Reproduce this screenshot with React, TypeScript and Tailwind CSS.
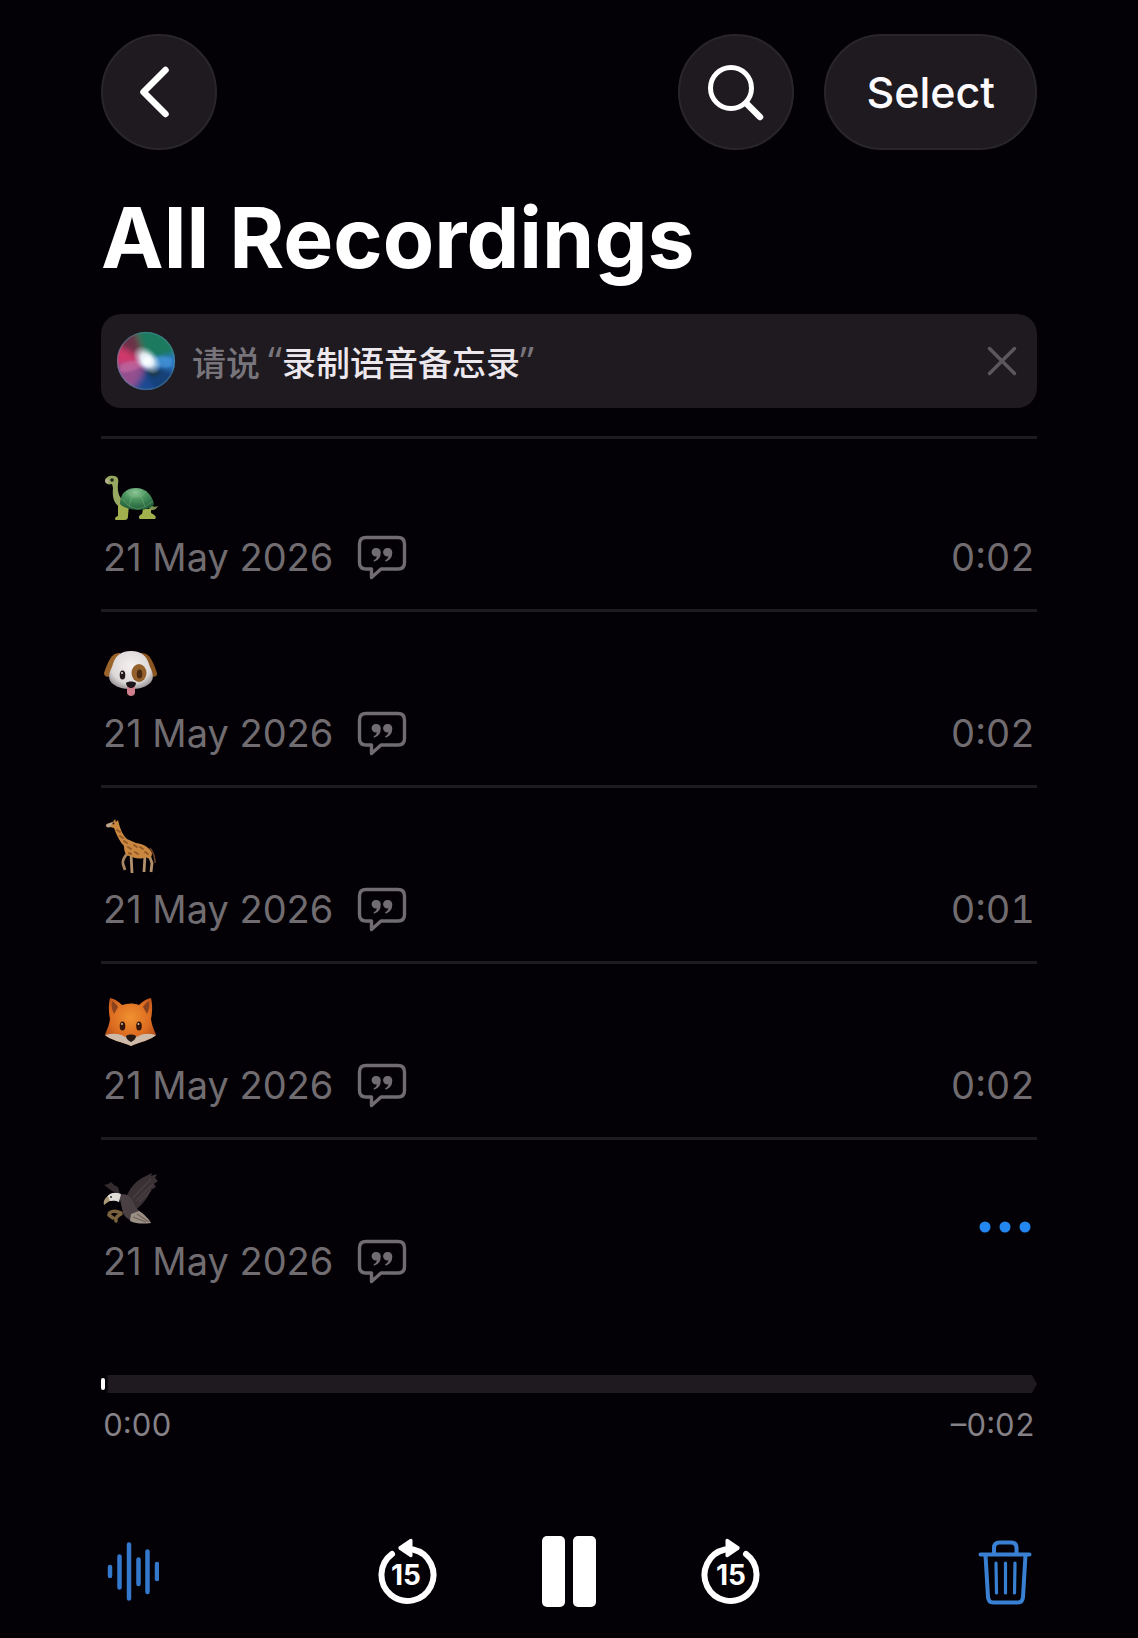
import React from 'react';

type Recording = {
  id: string;
  name: string;
  icon: React.ReactNode;
  date: string;
  duration?: string;
};

function Turtle() {
  return (
    <svg viewBox="0 0 56 56" className="w-14 h-14" role="img" aria-label="Turtle">
      <defs>
        <radialGradient id="shell" cx="45%" cy="20%" r="80%">
          <stop offset="0" stopColor="#8fc79a" />
          <stop offset="0.4" stopColor="#4d9660" />
          <stop offset="1" stopColor="#1f5c38" />
        </radialGradient>
      </defs>
      <path d="M47 39 C50 41 53 41 55 40 C54 43 50 45 46 44 Z" fill="#7d9450" />
      <path d="M2 15 C2 11 7 9 11 10 C15 10 16 14 15 18 C14 27 17 32 21 36 L17 41 C11 38 9 31 10 22 L9 18 C6 19 2 18 2 15 Z" fill="#97a860" />
      <path d="M15 39 H26 L25 50 C25 53 24 54 21 54 H13 C11 53 12 51 15 50 Z" fill="#a3b04e" />
      <path d="M40 43 H48 L48 47 C52 49 54 51 52 53 H37 C35 52 36 49 39 48 Z" fill="#a3b04e" />
      <path d="M17 38 C17 28 23 22 33 22 C43 22 49 29 51 38 C46 46 26 46 17 38 Z" fill="url(#shell)" />
      <path d="M23 25 L29 30 L38 30 L44 25 M29 30 L26 40 M38 30 L42 41 M26 40 L34 43 L42 41 M19 33 L26 40 M50 35 L42 41" stroke="#9bc58a" strokeOpacity="0.35" strokeWidth="1" fill="none" />
      <circle cx="9" cy="14" r="1.8" fill="#20251a" />
      <path d="M2 15 C3 12 6 13 6 15 C6 18 3 18 2 15" fill="#b4ad92" />
    </svg>
  );
}

function Dog() {
  return (
    <svg viewBox="0 0 56 56" className="w-14 h-14" role="img" aria-label="Dog">
      <defs>
        <radialGradient id="dogFace" cx="50%" cy="40%" r="60%">
          <stop offset="0" stopColor="#f5f1f0" />
          <stop offset="0.75" stopColor="#dcd8d8" />
          <stop offset="1" stopColor="#a29ea0" />
        </radialGradient>
      </defs>
      <path d="M17 11 C9 10 5 19 1 31 C1 35 5 36 9 33 L18 20 Z" fill="#9b642b" />
      <path d="M38 11 C46 10 50 19 54 31 C55 35 50 36 46 33 L38 20 Z" fill="#8b5520" />
      <path d="M28 9 C39 9 44 14 47 25 C51 33 51 38 46 42 C41 46 35 47 28 47 C21 47 15 46 10 42 C5 38 5 33 9 25 C12 14 17 9 28 9 Z" fill="url(#dogFace)" />
      <path d="M24 44 H32 L32 51 C31 55 25 55 24 51 Z" fill="#cf7f8c" />
      <ellipse cx="36" cy="31" rx="7.500" ry="9" fill="#93602c" />
      <ellipse cx="19.500" cy="33" rx="2.800" ry="4.500" fill="#24191a" />
      <ellipse cx="36.500" cy="32" rx="2.800" ry="4.500" fill="#4a2911" />
      <circle cx="19" cy="31" r="0.900" fill="#fff" />
      <path d="M23 41 C25 39 31 39 33 41 C33 44 30 46 28 46 C26 46 23 44 23 41 Z" fill="#1c1519" />
    </svg>
  );
}

function Giraffe() {
  return (
    <svg viewBox="0 0 56 56" className="w-14 h-14" role="img" aria-label="Giraffe">
      <path d="M25 35 C21 39 19 42 20 46 L22 52" stroke="#a98763" strokeWidth="2.800" fill="none" strokeLinejoin="round" />
      <path d="M28 36 L29 55 M42 37 L41 54 M46 37 L49 45 L48 54" stroke="#b3916b" strokeWidth="2.800" fill="none" strokeLinejoin="round" />
      <path d="M47 30 C51 35 52 39 52 45" stroke="#6d4225" strokeWidth="1.500" fill="none" />
      <path d="M10 4 L12 1 L13 4 L15 2 L16 6 C18 13 20 17 24 21 L33 25 C41 26 47 30 49 35 C49 40 46 42 43 39 C37 42 31 40 27 38 C22 38 21 32 21 28 C17 24 14 18 11 10 L7 9 C4 10 2 8 4 6 Z" fill="#c98740" />
      <path d="M10 4 L7 9 C4 10 2 8 4 6 Z" fill="#b9a58e" />
      <path d="M14 12 L17 14 M17 18 L20 20 M21 23 L24 25 M25 29 L28 31 M31 27 L34 29 M32 34 L35 36 M37 29 L40 31 M42 34 L45 36 M26 35 L28 36" stroke="#965b27" strokeWidth="2" strokeLinecap="round" />
      <circle cx="10.500" cy="5.500" r="1" fill="#24170f" />
    </svg>
  );
}

function Fox() {
  return (
    <svg viewBox="0 0 56 56" className="w-14 h-14" role="img" aria-label="Fox">
      <defs>
        <radialGradient id="foxFace" cx="50%" cy="40%" r="65%">
          <stop offset="0" stopColor="#f19131" />
          <stop offset="0.6" stopColor="#dc6c20" />
          <stop offset="1" stopColor="#a84418" />
        </radialGradient>
      </defs>
      <path d="M7 4 C12 5 16 8 19 11 C25 9 31 9 36 11 C39 8 43 5 48 4 C50 12 49 20 48 25 C49 33 52 37 53 41 C48 46 37 48 28 52 C19 48 7 46 2 41 C3 37 6 33 7 25 C6 20 5 12 7 4 Z" fill="url(#foxFace)" />
      <path d="M9 7 C12 9 14 11 15 13 L11 20 C9 16 8 12 9 7 Z M46 7 C43 9 41 11 40 13 L44 20 C46 16 47 12 46 7 Z" fill="#8b421e" />
      <path d="M2 41 C9 39 17 39 22 43 C25 40 31 40 34 43 C39 39 46 39 53 41 C48 46 37 48 28 52 C19 48 7 46 2 41 Z" fill="#cdbaa9" />
      <ellipse cx="19.500" cy="32" rx="2.800" ry="4.500" fill="#33150b" />
      <ellipse cx="36" cy="32" rx="2.800" ry="4.500" fill="#33150b" />
      <circle cx="19" cy="30" r="0.900" fill="#f0c9a4" />
      <circle cx="35.500" cy="30" r="0.900" fill="#f0c9a4" />
      <path d="M23 42 C25 40 31 40 33 42 C33 45 30 47 28 48 C26 47 23 45 23 42 Z" fill="#241711" />
    </svg>
  );
}

function Eagle() {
  return (
    <svg viewBox="0 0 56 56" className="w-14 h-14" role="img" aria-label="Eagle">
      <path d="M1 15 L5 14 L8 12 L11 15 L15 17 L17 24 L9 21 Z" fill="#332b2e" />
      <path d="M23 28 C26 19 32 12 39 8 L49 3 L48 6 L54 4 L52 8 L55 11 L51 14 L53 17 L48 20 C45 28 40 33 34 39 L25 39 Z" fill="#3a3135" />
      <path d="M30 28 L48 9 M33 31 L50 14 M36 32 L48 20" stroke="#4a4044" strokeWidth="1.200" />
      <path d="M16 25 C25 22 29 28 33 38 L41 45 L37 51 C29 53 23 49 20 43 Z" fill="#4a4044" />
      <path d="M28 44 L36 41 C41 44 46 49 48 53 C41 54 33 54 27 51 Z" fill="#9c9085" />
      <path d="M30 47 L43 52 M34 44 L46 52" stroke="#6d615d" strokeWidth="1.200" />
      <path d="M18 43 C12 40 6 41 6 45 L10 48 M18 44 C14 46 12 48 13 51" stroke="#79623e" strokeWidth="3.500" fill="none" strokeLinecap="round" />
      <path d="M4 27 C7 22 13 22 18 24 L16 32 C12 30 8 31 5 31 Z" fill="#e2dcd8" />
      <path d="M5 26 C2 28 0 31 1 35 C3 34 4 32 7 31 Z" fill="#ac9975" />
      <circle cx="8" cy="27" r="0.900" fill="#1e1a1d" />
    </svg>
  );
}

const recordings: Recording[] = [
  { id: 'turtle', name: 'Turtle', icon: <Turtle />, date: '21 May 2026', duration: '0:02' },
  { id: 'dog', name: 'Dog', icon: <Dog />, date: '21 May 2026', duration: '0:02' },
  { id: 'giraffe', name: 'Giraffe', icon: <Giraffe />, date: '21 May 2026', duration: '0:01' },
  { id: 'fox', name: 'Fox', icon: <Fox />, date: '21 May 2026', duration: '0:02' },
  { id: 'eagle', name: 'Eagle', icon: <Eagle />, date: '21 May 2026' },
];

function SiriOrb() {
  return (
    <svg viewBox="0 0 60 60" className="w-[60px] h-[60px] shrink-0" aria-hidden="true">
      <defs>
        <clipPath id="orbClip">
          <circle cx="30" cy="30" r="29" />
        </clipPath>
        <filter id="orbSoft" x="-30%" y="-30%" width="160%" height="160%">
          <feGaussianBlur stdDeviation="3" />
        </filter>
        <filter id="orbFine" x="-30%" y="-30%" width="160%" height="160%">
          <feGaussianBlur stdDeviation="1.2" />
        </filter>
        <radialGradient id="orbGlow">
          <stop offset="0" stopColor="#fff" />
          <stop offset="0.4" stopColor="#f4fbff" stopOpacity="0.9" />
          <stop offset="1" stopColor="#c9dcf0" stopOpacity="0" />
        </radialGradient>
      </defs>
      <g clipPath="url(#orbClip)">
        <rect width="60" height="60" fill="#23406a" />
        <g filter="url(#orbSoft)">
          <path d="M30 30 L-4 8 V40 Z" fill="#d0376a" />
          <path d="M30 30 L-2 12 L22 -4 Z" fill="#6a3247" />
          <path d="M30 30 L18 -4 H64 V24 Z" fill="#1c7a5e" />
          <path d="M30 30 L64 22 V42 Z" fill="#2b78c4" />
          <path d="M30 30 L62 42 L50 62 H20 Z" fill="#173f78" />
          <path d="M30 30 L-4 34 L6 58 H22 Z" fill="#94508f" />
          <path d="M14 62 L28 42 L42 62 Z" fill="#1d4c94" />
        </g>
        <g filter="url(#orbFine)">
          <path d="M4 35 C12 28 22 30 30 31 C24 38 10 44 4 40 Z" fill="#d673a8" fillOpacity="0.5" />
          <path d="M31 31 C40 24 50 24 56 28 L55 35 C48 39 40 35 31 31 Z" fill="#4b9be0" fillOpacity="0.6" />
          <path d="M35 37 L46 42 L37 46 L30 41 Z" fill="#1d3744" fillOpacity="0.8" />
        </g>
        <ellipse cx="31" cy="29" rx="17" ry="11" transform="rotate(45 31 29)" fill="url(#orbGlow)" />
        <circle cx="31" cy="30" r="8" fill="url(#orbGlow)" />
      </g>
      <circle cx="30" cy="30" r="28.500" fill="none" stroke="#5790a0" strokeOpacity="0.4" strokeWidth="1.500" />
    </svg>
  );
}

function TranscriptIcon() {
  return (
    <svg viewBox="0 0 50 46" className="w-[50px] h-[46px]" role="img" aria-label="Transcript available">
      <path
        d="M9 3.500 H41 Q47.500 3.500 47.500 10 V28.500 Q47.500 35 41 35 H24 L14.500 43.500 V35 H9 Q2.500 35 2.500 28.500 V10 Q2.500 3.500 9 3.500 Z"
        fill="none"
        stroke="#706c70"
        strokeWidth="3.400"
        strokeLinejoin="round"
      />
      <path
        d="M19.500 14 A4.300 4.300 0 1 0 20 22.400 Q19.300 25 16.600 26.200 Q16.400 27.600 17.600 27.600 Q23.800 25.500 23.800 18.300 A4.300 4.300 0 0 0 19.500 14 Z M31 14 A4.300 4.300 0 1 0 31.500 22.400 Q30.800 25 28.100 26.200 Q27.900 27.600 29.100 27.600 Q35.300 25.500 35.300 18.300 A4.300 4.300 0 0 0 31 14 Z"
        fill="#706c70"
      />
    </svg>
  );
}

function SkipBack() {
  return (
    <svg viewBox="0 0 60 68" className="w-[60px] h-[68px]" aria-hidden="true">
      <path d="M15 17 A26 26 0 1 0 36 12.500" fill="none" stroke="#fff" strokeWidth="6" strokeLinecap="round" />
      <path d="M21.500 11.500 Q21 10.500 22 9.500 L33 2 Q35.500 1 35.500 3.500 V18.500 Q35.500 21 33 20 L22 12.500 Z" fill="#fff" />
      <text x="29" y="48" textAnchor="middle" fontSize="28" fontWeight="700" fill="#fff">
        15
      </text>
    </svg>
  );
}

function SkipForward() {
  return (
    <svg viewBox="0 0 60 68" className="w-[60px] h-[68px]" aria-hidden="true">
      <path d="M45 17 A26 26 0 1 1 24 12.500" fill="none" stroke="#fff" strokeWidth="6" strokeLinecap="round" />
      <path d="M38.500 11.500 Q39 10.500 38 9.500 L27 2 Q24.500 1 24.500 3.500 V18.500 Q24.500 21 27 20 L38 12.500 Z" fill="#fff" />
      <text x="30" y="48" textAnchor="middle" fontSize="28" fontWeight="700" fill="#fff">
        15
      </text>
    </svg>
  );
}

function RecordingRow({ recording }: { recording: Recording }) {
  return (
    <li className="flex items-center justify-between border-b-[3px] border-[#1e1b20] px-[2px] pt-[30px] pb-[29px] first:pt-[27px] last:border-b-0">
      <div>
        {recording.icon}
        <div className="mt-3 flex items-center gap-6">
          <time dateTime="2026-05-21" className="text-[38px] leading-[46px] text-[#706c70]">
            {recording.date}
          </time>
          <TranscriptIcon />
        </div>
      </div>
      {recording.duration ? (
        <span className="self-end text-[38px] leading-[46px] text-[#706c70] tabular-nums">{recording.duration}</span>
      ) : (
        <button type="button" aria-label={`More options for ${recording.name}`} className="pr-[3px]">
          <svg viewBox="0 0 54 12" className="w-[54px] h-3" fill="#2487f0">
            <circle cx="7" cy="6" r="5.500" />
            <circle cx="27" cy="6" r="5.500" />
            <circle cx="47" cy="6" r="5.500" />
          </svg>
        </button>
      )}
    </li>
  );
}

export default function App() {
  return (
    <main className="min-h-screen bg-[#030006] px-[101px] pt-[34px] pb-[27px] font-['Inter','Noto_Sans_CJK_SC',sans-serif] text-white">
      <header className="flex items-center justify-between">
        <button
          type="button"
          aria-label="Back"
          className="flex h-[116px] w-[116px] items-center justify-center rounded-full border-2 border-[#29262b] bg-[#1e1a1f]"
        >
          <svg viewBox="0 0 40 56" className="w-10 h-14" fill="none" stroke="#fff" strokeWidth="6.500" strokeLinecap="round" strokeLinejoin="round">
            <path d="M26.500 6 L4.500 28 L26.500 50" />
          </svg>
        </button>
        <div className="flex items-center gap-[30px]">
          <button
            type="button"
            aria-label="Search"
            className="flex h-[116px] w-[116px] items-center justify-center rounded-full border-2 border-[#29262b] bg-[#1e1a1f]"
          >
            <svg viewBox="0 0 60 60" className="w-[60px] h-[60px]" fill="none" stroke="#fff" strokeLinecap="round">
              <circle cx="25" cy="26" r="20.500" strokeWidth="5" />
              <path d="M40.500 41.500 L54 55" strokeWidth="6.500" />
            </svg>
          </button>
          <button
            type="button"
            className="h-[116px] rounded-full border-2 border-[#29262b] bg-[#1e1a1f] px-10 text-[43px] font-medium text-[#fdfafd]"
          >
            Select
          </button>
        </div>
      </header>

      <h1 className="mt-10 text-[84px] leading-[96px] font-bold">All Recordings</h1>

      <section className="mt-7 flex items-center rounded-[20px] bg-[#1e1a1f] py-[17px] pr-[17px] pl-[15px]">
        <SiriOrb />
        <p className="ml-4 flex items-baseline font-['Noto_Sans_CJK_SC',sans-serif] text-[34px] leading-10 font-medium text-[#77747b]">
          <span>请说</span>
          <span className="ml-2 font-['Open_Sans'] text-[40px] leading-10">“</span>
          <span className="text-[#ece8ee]">录制语音备忘录</span>
          <span className="font-['Open_Sans'] text-[40px] leading-10">”</span>
        </p>
        <button type="button" aria-label="Dismiss" className="ml-auto">
          <svg viewBox="0 0 36 36" className="w-9 h-9" fill="none" stroke="#5b575c" strokeWidth="3.500" strokeLinecap="round">
            <path d="M5.500 5.500 L30.500 30.500 M30.500 5.500 L5.500 30.500" />
          </svg>
        </button>
      </section>

      <ul className="mt-7 border-t-[3px] border-[#1e1b20]">
        {recordings.map((recording) => (
          <RecordingRow key={recording.id} recording={recording} />
        ))}
      </ul>

      <section className="mt-[62px]">
        <input
          type="range"
          aria-label="Playback position"
          min={0}
          max={2}
          step={0.1}
          defaultValue={0}
          className="block h-[18px] w-full appearance-none bg-[linear-gradient(to_right,transparent_5px,#1e1a1f_8px)] [clip-path:polygon(0_0,calc(100%_-_5px)_0,100%_50%,calc(100%_-_5px)_100%,0_100%)] [&::-webkit-slider-thumb]:h-3 [&::-webkit-slider-thumb]:w-1 [&::-webkit-slider-thumb]:appearance-none [&::-webkit-slider-thumb]:rounded-full [&::-webkit-slider-thumb]:bg-white"
        />
        <div className="mt-3 flex justify-between px-[2px] text-[31px] leading-10 text-[#858186] tabular-nums">
          <span>0:00</span>
          <span>–0:02</span>
        </div>
      </section>

      <footer className="mt-[90px] flex items-center justify-between pr-[5px] pl-1">
        <button type="button" aria-label="Edit waveform">
          <svg viewBox="0 0 54 68" className="w-[54px] h-[68px]" fill="none" stroke="#3478cc" strokeWidth="4.500" strokeLinecap="round">
            <path d="M5 30 V39 M14.500 19.500 V50.500 M24 7.500 V61.500 M33.500 22.500 V47 M42.500 14.500 V55 M52 27 V42" />
          </svg>
        </button>
        <div className="flex items-center gap-[105px]">
          <button type="button" aria-label="Skip back 15 seconds">
            <SkipBack />
          </button>
          <button type="button" aria-label="Pause">
            <svg viewBox="0 0 54 72" className="w-[54px] h-[72px]" fill="#fff">
              <rect x="0" y="1" width="23" height="71" rx="5" />
              <rect x="31" y="1" width="23" height="71" rx="5" />
            </svg>
          </button>
          <button type="button" aria-label="Skip forward 15 seconds">
            <SkipForward />
          </button>
        </div>
        <button type="button" aria-label="Delete recording">
          <svg viewBox="0 0 54 68" className="w-[54px] h-[68px]" fill="none" stroke="#3a80d2" strokeWidth="4" strokeLinecap="round" strokeLinejoin="round">
            <path d="M2.500 17.500 H51.500 M16 17 V11 Q16 5.500 21.500 5.500 H33 Q38.500 5.500 38.500 11 V17" />
            <path d="M7.500 18 L10 60 Q10.500 65.500 15 65.500 H40 Q44.500 65.500 45 60 L47.500 18" />
            <path d="M18 26 L18.500 56 M27.500 26 V56 M37 26 L36.500 56" strokeWidth="3.200" />
          </svg>
        </button>
      </footer>
    </main>
  );
}
